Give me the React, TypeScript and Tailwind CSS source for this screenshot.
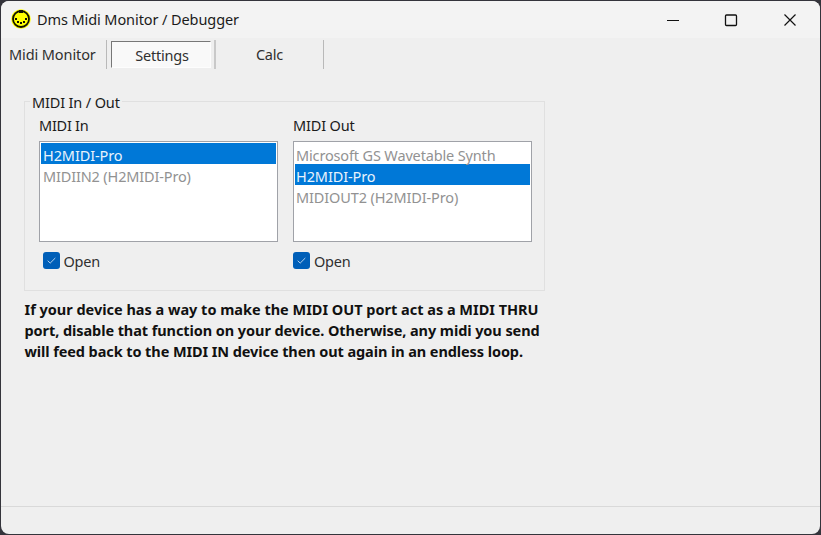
import React from "react";

type Item = { label: string; selected?: boolean; track: string };

function ListBox({ items }: { items: Item[] }) {
  return (
    <div className="h-[101px] w-[239px] border border-[#a0a2a8] bg-white p-px">
      {items.map((it) => (
        <div
          key={it.label}
          className={
            "h-[21px] whitespace-nowrap leading-[24px] " +
            it.track +
            (it.selected ? " bg-[#0078d7] text-[#e9f3fc]" : " text-[#929292]")
          }
        >
          {it.label}
        </div>
      ))}
    </div>
  );
}

function OpenCheck() {
  return (
    <label className="flex h-[17px] items-center">
      <span className="flex size-[17px] items-center justify-center rounded-[3px] bg-[#005fb8]">
        <svg width="17" height="17" viewBox="0 0 17 17" fill="none">
          <path d="M4.7 8.7 L7.2 11.1 L12.3 6" stroke="#b9d3ec" strokeWidth="1" />
        </svg>
      </span>
      <span className="ml-1 mt-px leading-5 tracking-[-0.25px] text-[#303030]">Open</span>
    </label>
  );
}

function MidiIcon() {
  return (
    <svg width="20" height="20" viewBox="0 0 20 20">
      <circle cx="10" cy="10" r="9.8" fill="#ffff00" />
      <circle cx="10" cy="10" r="8" fill="none" stroke="#111100" strokeWidth="1.8" />
      <g fill="#111100" shapeRendering="crispEdges">
        <path d="M8 1h4v3H8zM4 9h2v2H4zM14 9h2v2h-2zM6 12h2v2H6zM12 12h2v2h-2zM9 13h2v2H9z" />
      </g>
    </svg>
  );
}

export default function App() {
  return (
    <div className="h-[535px] w-[821px] overflow-hidden bg-[#34343b] p-px font-['Noto_Sans','Open_Sans',sans-serif] text-[14.5px] text-[#1b1b1b]">
      <div className="flex h-[533px] flex-col overflow-hidden rounded-[8px] bg-[#efefef]">
        <header className="flex h-[37px] shrink-0 items-center bg-[#f3f3f3] pl-[10px]">
          <span className="-mt-px"><MidiIcon /></span>
          <h1 className="ml-[6px] whitespace-nowrap tracking-[-0.09px]">Dms Midi Monitor / Debugger</h1>
          <svg className="ml-auto mr-[24px]" width="130" height="14" viewBox="0 0 130 14" fill="none" stroke="#111">
            <path d="M1 7h12" shapeRendering="crispEdges" />
            <rect x="59.5" y="2" width="11" height="10.5" rx="1" strokeWidth="1.3" />
            <path d="M118.5 1.5l11 11M129.5 1.5l-11 11" strokeWidth="1.2" />
          </svg>
        </header>

        <nav className="flex h-[31px] shrink-0 items-stretch pt-[2px] text-[#303030]">
          <div className="w-[106px] whitespace-nowrap border-r border-[#b9b9b9] pl-[8px] leading-[29px] tracking-[-0.1px]">Midi Monitor</div>
          <div className="ml-[4px] mt-px h-[27px] w-[100px] border border-b-[#fdfdfd] border-l-[#777] border-r-[#fdfdfd] border-t-[#777] bg-[#f9f9f9] pl-[2px] text-center leading-[26px] tracking-[-0.2px]">Settings</div>
          <div className="ml-[3px] w-[110px] border-l-2 border-r border-l-[#c9c9c9] border-r-[#b9b9b9] text-center leading-[29px] tracking-[-0.2px]">Calc</div>
        </nav>

        <main className="flex-1 pl-[23px] pt-[32px]">
          <section className="h-[190px] w-[521px] border border-[#e0e0e0]">
            <h2 className="-mt-[11px] ml-[5px] h-[22px] w-fit whitespace-nowrap bg-[#efefef] px-[2px] leading-[22px] tracking-[-0.15px]">MIDI In / Out</h2>
            <div className="flex gap-[15px] pl-[14px]">
              <div>
                <h3 className="h-[28px] leading-[25px] tracking-[-0.25px]">MIDI In</h3>
                <ListBox
                  items={[
                    { label: "H2MIDI-Pro", selected: true, track: "pl-[2px] tracking-[-0.1px]" },
                    { label: "MIDIIN2 (H2MIDI-Pro)", track: "pl-[2px] tracking-[-0.15px]" },
                  ]}
                />
                <div className="pl-[3.5px] pt-[10px]"><OpenCheck /></div>
              </div>
              <div>
                <h3 className="h-[28px] leading-[25px] tracking-[-0.15px]">MIDI Out</h3>
                <ListBox
                  items={[
                    { label: "Microsoft GS Wavetable Synth", track: "pl-px tracking-[-0.15px]" },
                    { label: "H2MIDI-Pro", selected: true, track: "pl-px tracking-[-0.1px]" },
                    { label: "MIDIOUT2 (H2MIDI-Pro)", track: "pl-px tracking-[-0.13px]" },
                  ]}
                />
                <div className="pt-[10px]"><OpenCheck /></div>
              </div>
            </div>
          </section>
          <p className="mt-[8px] whitespace-nowrap pl-[0.5px] font-bold leading-[21px] text-[#111]">
            <span className="block tracking-[-0.01px]">If your device has a way to make the MIDI OUT port act as a MIDI THRU</span>
            <span className="block tracking-[-0.08px]">port, disable that function on your device. Otherwise, any midi you send</span>
            <span className="block tracking-[-0.09px]">will feed back to the MIDI IN device then out again in an endless loop.</span>
          </p>
        </main>

        <footer className="h-[28px] shrink-0 border-t border-[#d9d9d9]" />
      </div>
    </div>
  );
}
